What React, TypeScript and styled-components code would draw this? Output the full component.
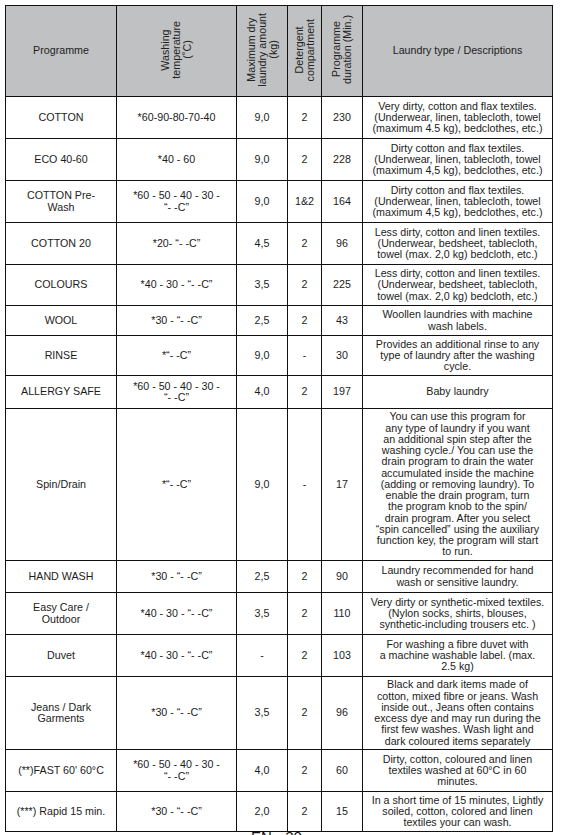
import React from "react";
import styled, { createGlobalStyle } from "styled-components";

const GlobalStyle = createGlobalStyle`
  html, body { margin: 0; padding: 0; background: #ffffff; }
  body { font-family: "Liberation Sans", Arial, sans-serif; color: #1c1c1c; }
`;

const Page = styled.div`
  padding: 5px 0 0 5px;
  width: 564px;
  height: 835px;
  box-sizing: border-box;
  overflow: hidden;
`;

const Table = styled.table`
  border-collapse: collapse;
  table-layout: fixed;
  width: 547px;
  font-size: 10.7px;
  line-height: 11.25px;
`;

const HeadRow = styled.tr`
  height: 91px;
`;

const HeadCell = styled.th`
  background: #c0c1c3;
  border: 1px solid #111;
  font-weight: normal;
  text-align: center;
  vertical-align: middle;
  padding: 0 2px;
  color: #222;
`;

const VerticalLabel = styled.span`
  display: inline-block;
  writing-mode: vertical-rl;
  transform: rotate(180deg);
  text-align: center;
  line-height: 10.8px;
  white-space: nowrap;
`;

const BodyRow = styled.tr<{ $h: number }>`
  height: ${(p) => p.$h}px;
`;

const Cell = styled.td`
  border: 1px solid #111;
  text-align: center;
  vertical-align: middle;
  padding: 0 2px;
  white-space: nowrap;
  color: #1c1c1c;
`;

const Footer = styled.div`
  margin-top: -3px;
  padding-left: 246px;
  font-size: 15px;
  line-height: 15px;
  color: #111;
`;

type Row = {
  name: string[];
  temp: string[];
  kg: string;
  det: string;
  dur: string;
  desc: string[];
  h: number;
};

const rows: Row[] = [
  {
    name: ["COTTON"],
    temp: ["*60-90-80-70-40"],
    kg: "9,0",
    det: "2",
    dur: "230",
    desc: [
      "Very dirty, cotton and flax textiles.",
      "(Underwear, linen, tablecloth, towel",
      "(maximum 4.5 kg), bedclothes, etc.)",
    ],
    h: 42,
  },
  {
    name: ["ECO 40-60"],
    temp: ["*40 - 60"],
    kg: "9,0",
    det: "2",
    dur: "228",
    desc: [
      "Dirty cotton and flax textiles.",
      "(Underwear, linen, tablecloth, towel",
      "(maximum 4,5 kg), bedclothes, etc.)",
    ],
    h: 42,
  },
  {
    name: ["COTTON Pre-", "Wash"],
    temp: ["*60 - 50 - 40 - 30 -", "“- -C”"],
    kg: "9,0",
    det: "1&2",
    dur: "164",
    desc: [
      "Dirty cotton and flax textiles.",
      "(Underwear, linen, tablecloth, towel",
      "(maximum 4,5 kg), bedclothes, etc.)",
    ],
    h: 42,
  },
  {
    name: ["COTTON 20"],
    temp: ["*20- “- -C”"],
    kg: "4,5",
    det: "2",
    dur: "96",
    desc: [
      "Less dirty, cotton and linen textiles.",
      "(Underwear, bedsheet, tablecloth,",
      "towel (max. 2,0 kg) bedcloth, etc.)",
    ],
    h: 42,
  },
  {
    name: ["COLOURS"],
    temp: ["*40 - 30 - “- -C”"],
    kg: "3,5",
    det: "2",
    dur: "225",
    desc: [
      "Less dirty, cotton and linen textiles.",
      "(Underwear, bedsheet, tablecloth,",
      "towel (max. 2,0 kg) bedcloth, etc.)",
    ],
    h: 41,
  },
  {
    name: ["WOOL"],
    temp: ["*30 - “- -C”"],
    kg: "2,5",
    det: "2",
    dur: "43",
    desc: ["Woollen laundries with machine", "wash labels."],
    h: 30,
  },
  {
    name: ["RINSE"],
    temp: ["*“- -C”"],
    kg: "9,0",
    det: "-",
    dur: "30",
    desc: [
      "Provides an additional rinse to any",
      "type of laundry after the washing",
      "cycle.",
    ],
    h: 40,
  },
  {
    name: ["ALLERGY SAFE"],
    temp: ["*60 - 50 - 40 - 30 -", "“- -C”"],
    kg: "4,0",
    det: "2",
    dur: "197",
    desc: ["Baby laundry"],
    h: 33,
  },
  {
    name: ["Spin/Drain"],
    temp: ["*“- -C”"],
    kg: "9,0",
    det: "-",
    dur: "17",
    desc: [
      "You can use this program for",
      "any type of laundry if you want",
      "an additional spin step after the",
      "washing cycle./ You can use the",
      "drain program to drain the water",
      "accumulated inside the machine",
      "(adding or removing laundry). To",
      "enable the drain program, turn",
      "the program knob to the spin/",
      "drain program. After you select",
      "“spin cancelled” using the auxiliary",
      "function key, the program will start",
      "to run.",
    ],
    h: 152,
  },
  {
    name: ["HAND WASH"],
    temp: ["*30 - “- -C”"],
    kg: "2,5",
    det: "2",
    dur: "90",
    desc: ["Laundry recommended for hand", "wash or sensitive laundry."],
    h: 32,
  },
  {
    name: ["Easy Care /", "Outdoor"],
    temp: ["*40 - 30 - “- -C”"],
    kg: "3,5",
    det: "2",
    dur: "110",
    desc: [
      "Very dirty or synthetic-mixed textiles.",
      "(Nylon socks, shirts, blouses,",
      "synthetic-including trousers etc. )",
    ],
    h: 42,
  },
  {
    name: ["Duvet"],
    temp: ["*40 - 30 - “- -C”"],
    kg: "-",
    det: "2",
    dur: "103",
    desc: [
      "For washing a fibre duvet with",
      "a machine washable label. (max.",
      "2.5 kg)",
    ],
    h: 42,
  },
  {
    name: ["Jeans / Dark", "Garments"],
    temp: ["*30 - “- -C”"],
    kg: "3,5",
    det: "2",
    dur: "96",
    desc: [
      "Black and dark items made of",
      "cotton, mixed fibre or jeans. Wash",
      "inside out., Jeans often contains",
      "excess dye and may run during the",
      "first few washes. Wash light and",
      "dark coloured items separately",
    ],
    h: 73,
  },
  {
    name: ["(**)FAST 60' 60°C"],
    temp: ["*60 - 50 - 40 - 30 -", "“- -C”"],
    kg: "4,0",
    det: "2",
    dur: "60",
    desc: [
      "Dirty, cotton, coloured and linen",
      "textiles washed at 60°C in 60",
      "minutes.",
    ],
    h: 42,
  },
  {
    name: ["(***) Rapid 15 min."],
    temp: ["*30 - “- -C”"],
    kg: "2,0",
    det: "2",
    dur: "15",
    desc: [
      "In a short time of 15 minutes, Lightly",
      "soiled, cotton, colored and linen",
      "textiles your can wash.",
    ],
    h: 40,
  },
];

const Lines: React.FC<{ lines: string[] }> = ({ lines }) => (
  <>
    {lines.map((l, i) => (
      <React.Fragment key={i}>
        {i > 0 && <br />}
        {l}
      </React.Fragment>
    ))}
  </>
);

export default function App() {
  return (
    <Page>
      <GlobalStyle />
      <Table>
        <colgroup>
          <col style={{ width: 111 }} />
          <col style={{ width: 120 }} />
          <col style={{ width: 51 }} />
          <col style={{ width: 34 }} />
          <col style={{ width: 41 }} />
          <col style={{ width: 190 }} />
        </colgroup>
        <thead>
          <HeadRow>
            <HeadCell>Programme</HeadCell>
            <HeadCell>
              <VerticalLabel>
                <Lines lines={["Washing", "temperature", "(˚C)"]} />
              </VerticalLabel>
            </HeadCell>
            <HeadCell>
              <VerticalLabel>
                <Lines lines={["Maximum dry", "laundry amount", "(kg)"]} />
              </VerticalLabel>
            </HeadCell>
            <HeadCell>
              <VerticalLabel>
                <Lines lines={["Detergent", "compartment"]} />
              </VerticalLabel>
            </HeadCell>
            <HeadCell>
              <VerticalLabel>
                <Lines lines={["Programme", "duration (Min.)"]} />
              </VerticalLabel>
            </HeadCell>
            <HeadCell>Laundry type / Descriptions</HeadCell>
          </HeadRow>
        </thead>
        <tbody>
          {rows.map((r, i) => (
            <BodyRow key={i} $h={r.h}>
              <Cell>
                <Lines lines={r.name} />
              </Cell>
              <Cell>
                <Lines lines={r.temp} />
              </Cell>
              <Cell>{r.kg}</Cell>
              <Cell>{r.det}</Cell>
              <Cell>{r.dur}</Cell>
              <Cell>
                <Lines lines={r.desc} />
              </Cell>
            </BodyRow>
          ))}
        </tbody>
      </Table>
      <Footer>EN - 20</Footer>
    </Page>
  );
}
